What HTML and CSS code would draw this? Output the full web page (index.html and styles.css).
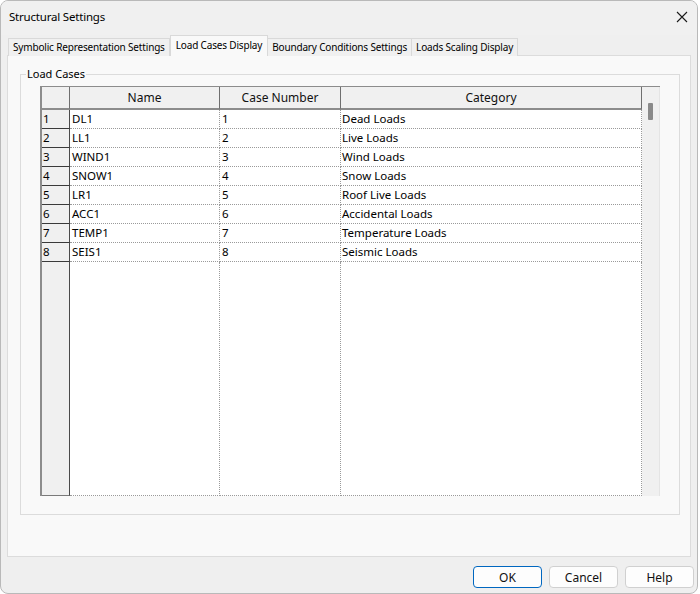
FILE: index.html
```html
<!DOCTYPE html>
<html>
<head>
<meta charset="utf-8">
<link rel="stylesheet" href="styles.css">
</head>
<body>
<div class="window">
  <div class="titlebar">
    <span class="title">Structural Settings</span>
    <span class="close"><svg width="12" height="12" viewBox="0 0 12 12"><path d="M1 1 L11 11 M11 1 L1 11" stroke="#1a1a1a" stroke-width="1.1" fill="none"/></svg></span>
  </div>
  <div class="tabs">
    <div class="tab">Symbolic Representation Settings</div>
    <div class="tab active">Load Cases Display</div>
    <div class="tab">Boundary Conditions Settings</div>
    <div class="tab">Loads Scaling Display</div>
  </div>
  <div class="panel">
    <fieldset class="group">
      <legend>Load Cases</legend>
      <div class="grid">
        <div class="sheet">
          <div class="hc corner"></div>
          <div class="hc">Name</div>
          <div class="hc">Case Number</div>
          <div class="hc">Category</div>

          <div class="rh">1</div><div class="c">DL1</div><div class="c">1</div><div class="c cat">Dead Loads</div>
          <div class="rh">2</div><div class="c">LL1</div><div class="c">2</div><div class="c cat">Live Loads</div>
          <div class="rh">3</div><div class="c">WIND1</div><div class="c">3</div><div class="c cat">Wind Loads</div>
          <div class="rh">4</div><div class="c">SNOW1</div><div class="c">4</div><div class="c cat">Snow Loads</div>
          <div class="rh">5</div><div class="c">LR1</div><div class="c">5</div><div class="c cat">Roof Live Loads</div>
          <div class="rh">6</div><div class="c">ACC1</div><div class="c">6</div><div class="c cat">Accidental Loads</div>
          <div class="rh">7</div><div class="c">TEMP1</div><div class="c">7</div><div class="c cat">Temperature Loads</div>
          <div class="rh">8</div><div class="c">SEIS1</div><div class="c">8</div><div class="c cat">Seismic Loads</div>

          <div class="rh fill"></div><div class="c fill"></div><div class="c fill"></div><div class="c fill"></div>
        </div>
        <div class="vscroll"><div class="thumb"></div></div>
      </div>
    </fieldset>
  </div>
  <div class="footer">
    <button class="btn default">OK</button>
    <button class="btn">Cancel</button>
    <button class="btn">Help</button>
  </div>
</div>
</body>
</html>
```

FILE: styles.css
```css
* { box-sizing: border-box; }
html, body { margin: 0; padding: 0; background: #ffffff; }
body {
  font-family: "Noto Sans", "Open Sans", sans-serif;
  color: #111;
  width: 700px;
  height: 594px;
  overflow: hidden;
}
.window {
  width: 698px;
  height: 594px;
  border: 1px solid #b9b9b9;
  border-radius: 8px;
  background: #efefef;
  display: flex;
  flex-direction: column;
  overflow: hidden;
}
.titlebar {
  height: 34px;
  flex: none;
  display: flex;
  align-items: center;
  justify-content: space-between;
  padding: 0 7px 3px 8px;
  background: #f0f0f0;
}
.title {
  font-size: 11.5px;
  letter-spacing: -0.2px;
  color: #000;
}
.close {
  display: flex;
  width: 12px;
  height: 12px;
  margin-right: 2px;
}
.tabs {
  flex: none;
  height: 21px;
  display: flex;
  align-items: flex-end;
  padding-left: 7px;
  position: relative;
  z-index: 1;
  margin-bottom: -1px;
}
.tab {
  height: 18px;
  font-size: 10px;
  letter-spacing: -0.17px;
  line-height: 16px;
  padding: 0 4px;
  border: 1px solid #d9d9d9;
  border-bottom: none;
  background: #f0f0f0;
  color: #000;
  white-space: nowrap;
}
.tab + .tab { border-left: none; }
.tab.active {
  height: 21px;
  line-height: 18px;
  padding: 0 5px;
  background: #f9f9f9;
  border-left: 1px solid #d9d9d9;
  margin-right: -1px;
  position: relative;
  z-index: 2;
}
.tab.active + .tab { border-left: 1px solid #d9d9d9; }
.panel {
  flex: none;
  height: 502px;
  margin: 0 6px 0 6px;
  border: 1px solid #dcdcdc;
  background: #f9f9f9;
  padding: 11px 10px 0 12px;
}
.group {
  margin: 0;
  padding: 0 19px 0 19px;
  border: 1px solid #dcdcdc;
  height: 448px;
  min-width: 0;
}
.group legend {
  font-size: 11px;
  line-height: 14px;
  padding: 0 1px;
  margin-left: -14px;
  color: #000;
}
.grid {
  margin-top: 5px;
  height: 410px;
  display: flex;
  border-top: 1px solid #8c8c8c;
  border-left: 2px solid #8c8c8c;
}
.sheet {
  display: grid;
  grid-template-columns: 28px 150px 121px 301px;
  grid-template-rows: 23px repeat(8, 19px) 1fr;
  background: #fff;
}
.hc {
  background: #f0f0f0;
  border-right: 1px solid #6f6f6f;
  border-bottom: 2px solid #8c8c8c;
  font-size: 12px;
  text-align: center;
  line-height: 21px;
  color: #111;
}
.rh {
  background: #f0f0f0;
  border-right: 1px solid #4a4a4a;
  border-bottom: 1px solid #3a3a3a;
  font-size: 11.5px;
  line-height: 18px;
  padding-left: 1px;
  color: #000;
}
.c {
  background: #fff;
  border-right: 1px dotted #9a9a9a;
  border-bottom: 1px dotted #9a9a9a;
  font-size: 11.5px;
  line-height: 18px;
  padding-left: 2px;
  white-space: nowrap;
  overflow: hidden;
  color: #000;
}
.c.cat { padding-left: 1px; }
.rh.fill { border-bottom: 1px solid #7a7a7a; }
.vscroll {
  width: 18px;
  background: #f0f0f0;
  border-right: 1px solid #e4e4e4;
  padding: 16px 0 0 6px;
}
.thumb {
  width: 5px;
  height: 17px;
  background: #8a8a8a;
  border-radius: 1px;
}
.footer {
  flex: 1;
  display: flex;
  justify-content: flex-end;
  align-items: flex-start;
  gap: 7px;
  padding: 9px 3px 0 0;
}
.btn {
  width: 69px;
  height: 22px;
  font-family: "Noto Sans", "Open Sans", sans-serif;
  font-size: 12px;
  color: #111;
  background: #fdfdfd;
  border: 1px solid #d0d0d0;
  border-radius: 4px;
  padding: 0;
}
.btn.default {
  border-color: #0067c0;
}
```
